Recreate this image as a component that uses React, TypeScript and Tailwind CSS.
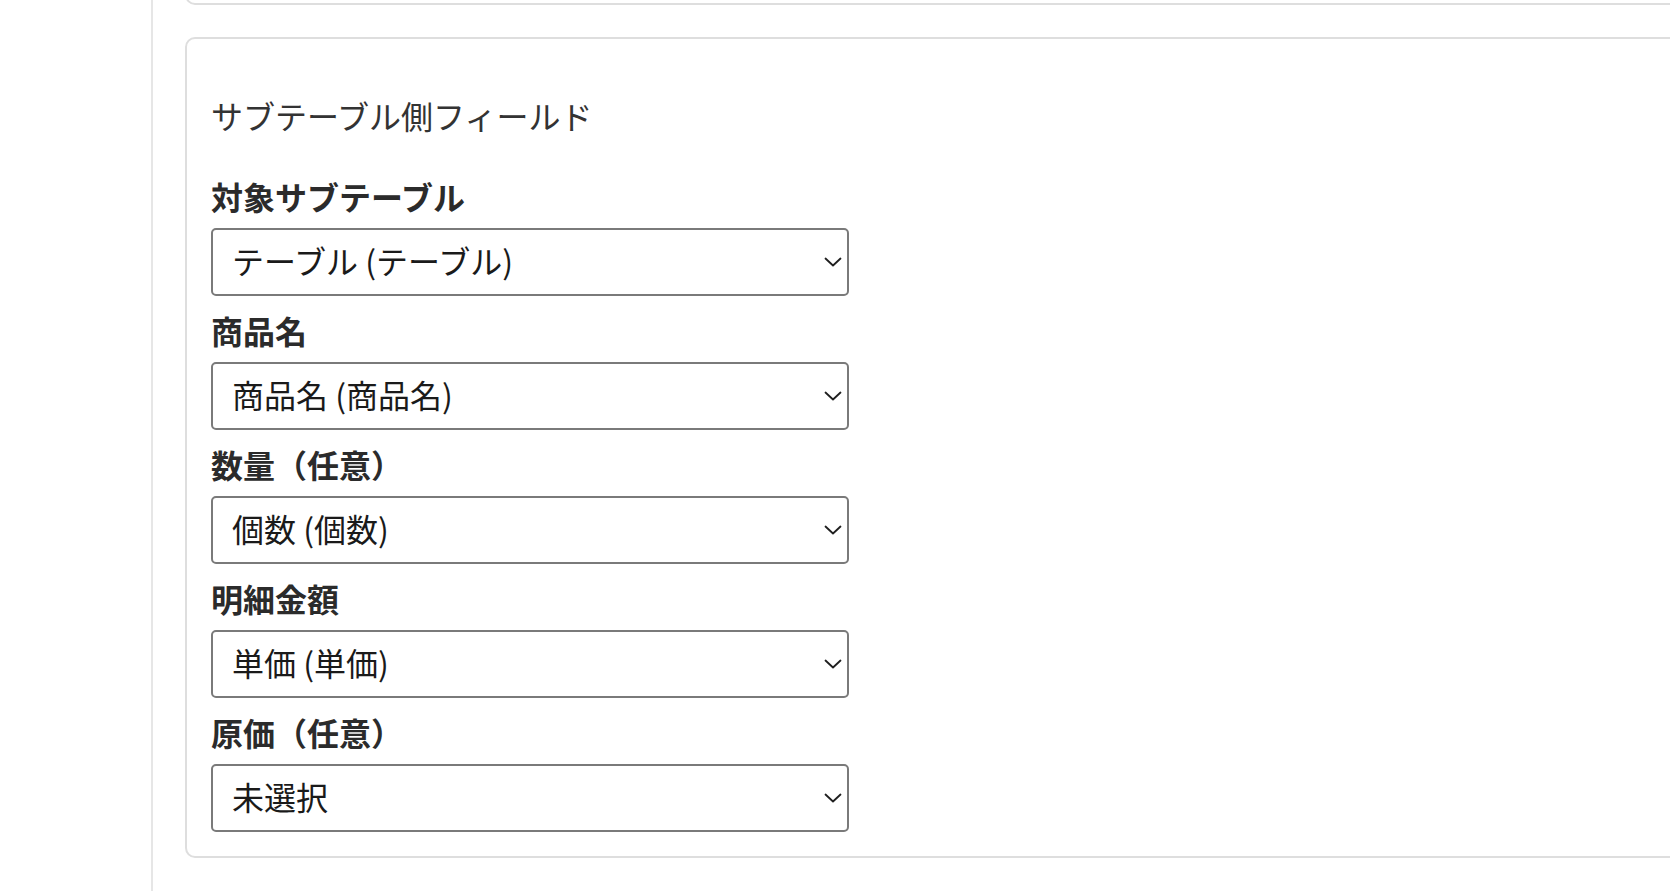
const fieldFont = {
  fontFamily: '"Noto Sans CJK JP", "Noto Sans", sans-serif',
};

interface FieldDef {
  label: string;
  value: string;
  options: string[];
}

const fields: FieldDef[] = [
  { label: '対象サブテーブル', value: 'テーブル (テーブル)', options: ['テーブル (テーブル)'] },
  { label: '商品名', value: '商品名 (商品名)', options: ['未選択', '商品名 (商品名)'] },
  { label: '数量（任意）', value: '個数 (個数)', options: ['未選択', '個数 (個数)'] },
  { label: '明細金額', value: '単価 (単価)', options: ['未選択', '単価 (単価)'] },
  { label: '原価（任意）', value: '未選択', options: ['未選択'] },
];

function Chevron() {
  return (
    <svg className="w-[18px] h-[10px]" viewBox="0 0 18 10" fill="none" stroke="#1f1f1f" strokeWidth={1.8} strokeLinecap="round" strokeLinejoin="round">
      <path d="M1.5 1.5 L9 8.5 L16.5 1.5" />
    </svg>
  );
}

function SelectField({ field }: { field: FieldDef }) {
  return (
    <div className="mb-[16px] last:mb-0">
      <label className="block text-[32px] leading-[36px] font-bold text-[#2b2b2b] mb-[14px]">
        {field.label}
      </label>
      <div className="relative w-[638px]">
        <select
          defaultValue={field.value}
          className="appearance-none block w-full h-[68px] pl-[19px] pr-[48px] pb-[4px] bg-white border-2 border-[#7a7a7a] rounded-[5px] text-[32px] text-[#1a1a1a] outline-none"
          style={fieldFont}
        >
          {field.options.map((o) => (
            <option key={o} value={o}>
              {o}
            </option>
          ))}
        </select>
        {/* chevron overlay */}
        <span className="pointer-events-none absolute right-[7px] top-1/2 -translate-y-1/2 flex">
          <Chevron />
        </span>
      </div>
    </div>
  );
}

export default function App() {
  return (
    <main className="min-h-screen h-[891px] bg-white overflow-hidden" style={fieldFont}>
      <div className="flex h-full">
        {/* left rail */}
        <div className="w-[151px] shrink-0" />
        <div className="flex-1 h-full border-l-2 border-[#e6e6e6] pl-[32px]">
          {/* previous card, scrolled off the top */}
          <div className="w-[1600px] h-[44px] -mt-[39px] border-2 border-[#dedede] rounded-[10px]" />

          {/* sub table card */}
          <section className="w-[1600px] mt-[32px] border-2 border-[#dedede] rounded-[10px] p-6">
            <h2 className="mt-[33px] mb-[44px] text-[32px] leading-[38px] font-normal text-[#333333]">
              サブテーブル側フィールド
            </h2>
            <div>
              {fields.map((f) => (
                <SelectField key={f.label} field={f} />
              ))}
            </div>
          </section>
        </div>
      </div>
    </main>
  );
}
